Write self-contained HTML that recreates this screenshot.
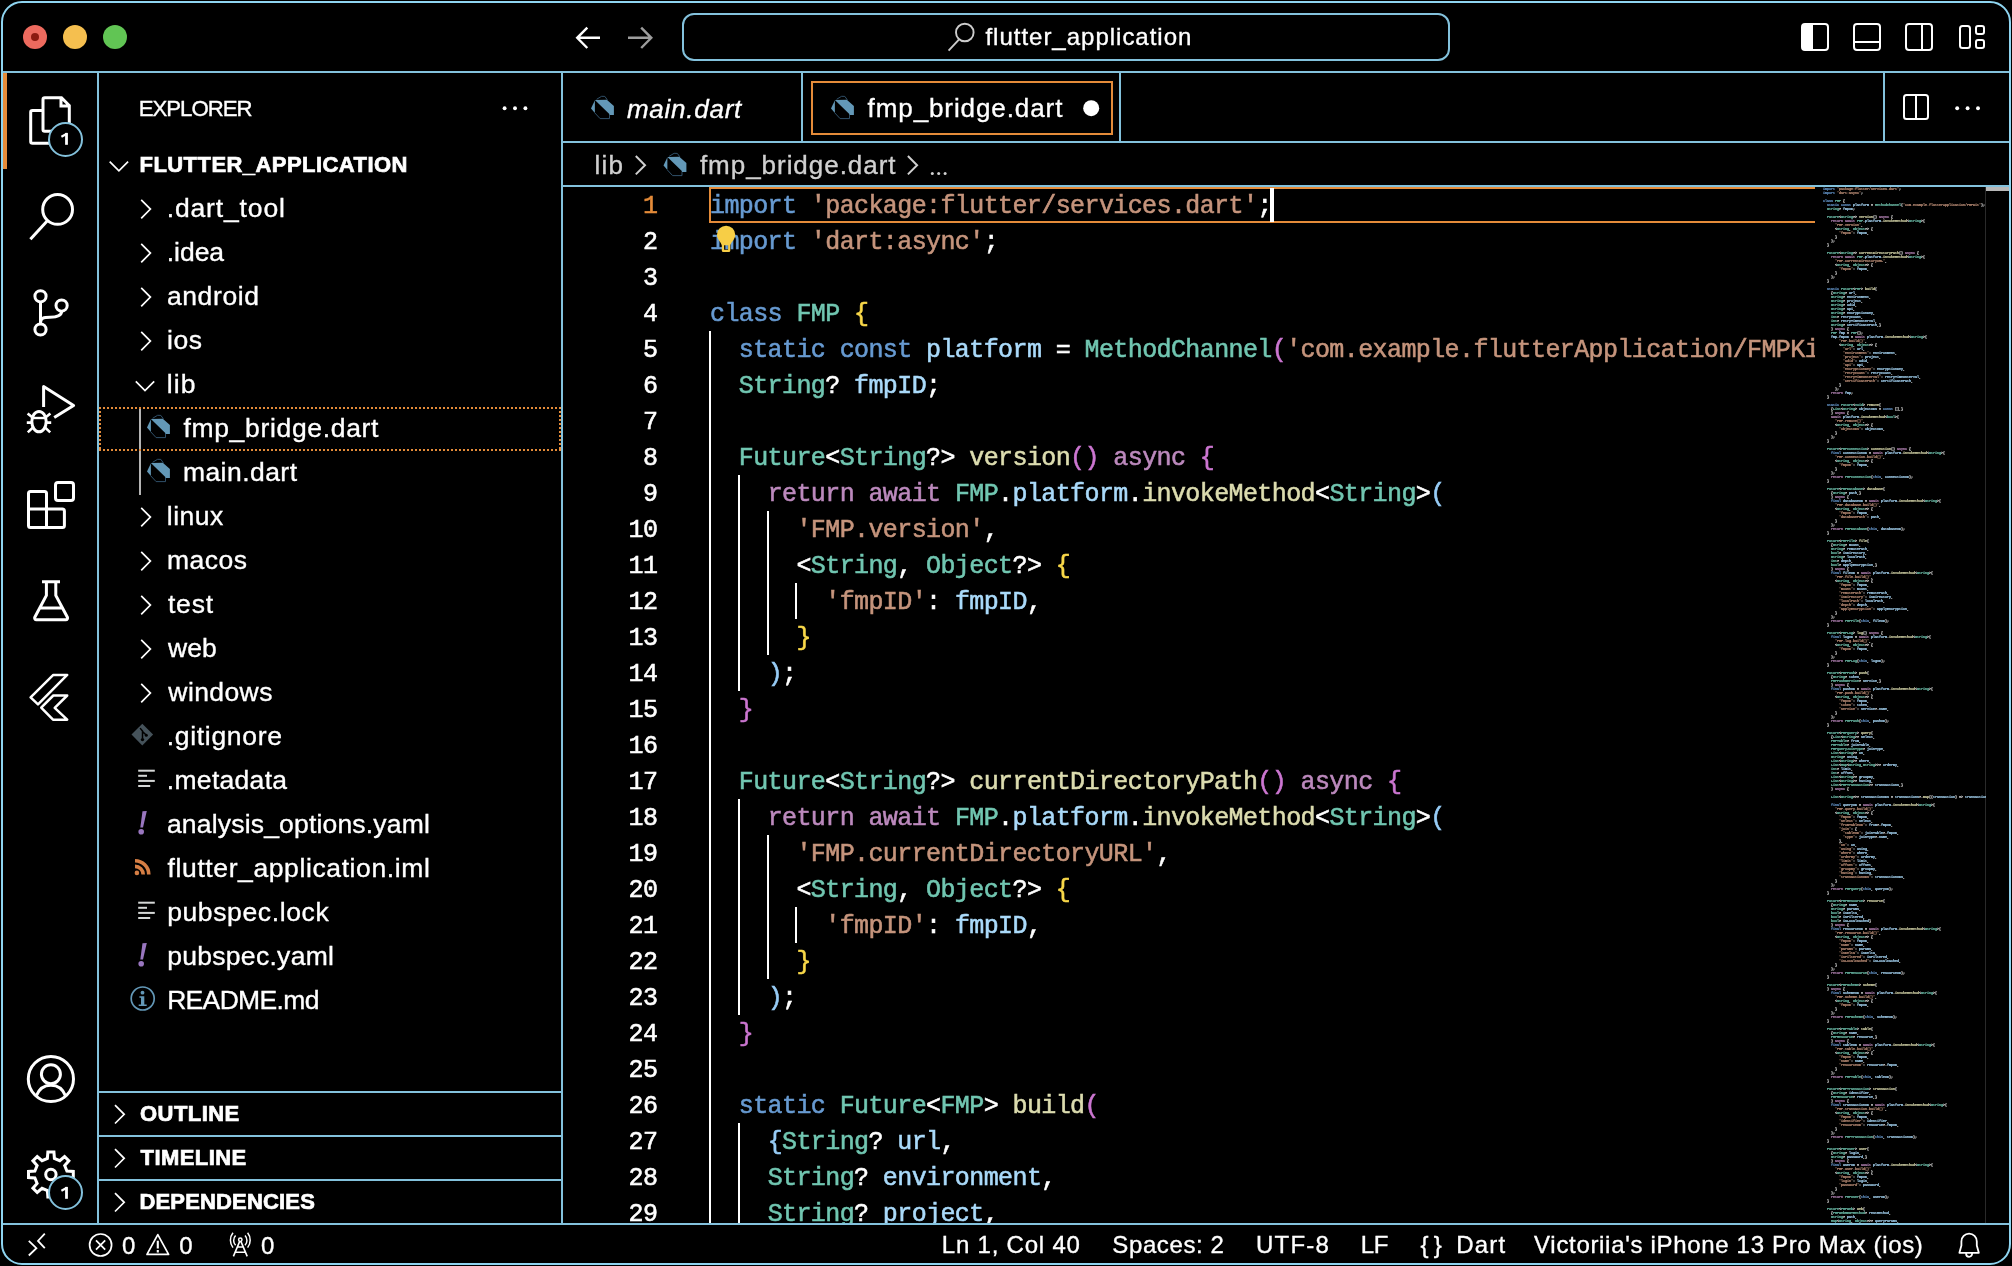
<!DOCTYPE html>
<html><head><meta charset="utf-8"><title>fmp_bridge.dart — flutter_application</title>
<style>
*{box-sizing:border-box;margin:0;padding:0}
html,body{width:2012px;height:1266px;background:#000;overflow:hidden}
body{font-family:"Liberation Sans",sans-serif;color:#fff;position:relative;-webkit-font-smoothing:antialiased}
.abs{position:absolute}

#win{position:absolute;left:1px;top:1px;width:2010px;height:1264px;border:2px solid #8ed4f0;border-radius:21px;pointer-events:none;z-index:50}
.t{position:absolute;white-space:pre;line-height:1;color:#fff;-webkit-text-stroke:0.35px currentColor}
.ui{font-size:26px}
.row{position:absolute;left:99px;width:462px;height:44px}
.mono{font-family:"Liberation Mono",monospace}
#code{position:absolute;left:563px;top:187px;width:1252px;height:1036px;overflow:hidden}
.cl{position:absolute;left:147px;height:36px;line-height:36px;font-family:"Liberation Mono",monospace;font-size:25px;letter-spacing:-0.6px;white-space:pre;color:#fff;-webkit-text-stroke:0.55px currentColor}
.ln{position:absolute;left:0;width:94.4px;height:36px;line-height:36px;text-align:right;font-family:"Liberation Mono",monospace;font-size:25px;letter-spacing:-0.6px;color:#fff;-webkit-text-stroke:0.55px currentColor}
.g{position:absolute;width:2px;background:#fff}
#mm{position:absolute;left:1823px;top:187px;width:163px;height:1036px;overflow:hidden}
#mmi{transform-origin:0 0;transform:scale(0.16666667);font-family:"Liberation Mono",monospace;font-size:20px;line-height:24px;white-space:pre;color:#fff;width:1200px;font-weight:bold;-webkit-text-stroke:0.7px currentColor}
</style></head><body>
<div id="root" style="position:absolute;left:0;top:0;width:2012px;height:1266px;will-change:transform">
<div class="abs" style="left:3px;top:71px;width:2006px;height:2px;background:#83C1DC"></div>
<div class="abs" style="left:97px;top:73px;width:2px;height:1150px;background:#83C1DC"></div>
<div class="abs" style="left:561px;top:73px;width:2px;height:1150px;background:#83C1DC"></div>
<div class="abs" style="left:563px;top:141px;width:1446px;height:2px;background:#83C1DC"></div>
<div class="abs" style="left:563px;top:185px;width:1446px;height:2px;background:#83C1DC"></div>
<div class="abs" style="left:3px;top:1223px;width:2006px;height:2px;background:#83C1DC"></div>
<div class="abs" style="left:23px;top:25px;width:24px;height:24px;border-radius:50%;background:#ED6A5E"></div>
<div class="abs" style="left:63px;top:25px;width:24px;height:24px;border-radius:50%;background:#F5BF4F"></div>
<div class="abs" style="left:103px;top:25px;width:24px;height:24px;border-radius:50%;background:#61C554"></div>
<div class="abs" style="left:31px;top:33px;width:8px;height:8px;border-radius:50%;background:#8C1A10"></div>
<svg class="abs" style="left:570px;top:20px;" width="90" height="36" viewBox="570 20 90 36" fill="none" stroke="#fff" stroke-width="3" stroke-linecap="butt" stroke-linejoin="miter"><path d="M600 37.8 H577.5 M587.3 27.6 L577.2 37.8 L587.3 48" stroke="#fff" stroke-width="2.4"/><path d="M628 37.8 H651 M641.2 27.6 L651.3 37.8 L641.2 48" stroke="#9d9d9d" stroke-width="2.4"/></svg>
<div class="abs" style="left:682px;top:13px;width:768px;height:48px;border:2px solid #83C1DC;border-radius:12px"></div>
<svg class="abs" style="left:944px;top:20px;" width="36" height="36" viewBox="944 20 36 36" fill="none" stroke="#fff" stroke-width="3" stroke-linecap="butt" stroke-linejoin="miter"><circle cx="964.8" cy="32.5" r="8.8" stroke="#ccc" stroke-width="1.9"/><path d="M958.9 39.6 L948.6 50.6" stroke="#ccc" stroke-width="1.9"/></svg>
<span class="t" id="t1" style="left:985.419px;top:25.18px;font-size:24px;color:#fff;letter-spacing:0.992px;">flutter_application</span>
<svg class="abs" style="left:1796px;top:18px;" width="196" height="38" viewBox="1796 18 196 38" fill="none" stroke="#fff" stroke-width="3" stroke-linecap="butt" stroke-linejoin="miter"><rect x="1802" y="24" width="26" height="26" rx="3" stroke-width="2"/><path d="M1802 26 a2 2 0 0 1 2 -2 H1813 V50 H1804 a2 2 0 0 1 -2 -2 Z" fill="#fff" stroke="none"/><rect x="1854" y="24" width="26" height="26" rx="3" stroke-width="2"/><path d="M1854 42 H1880" stroke-width="2"/><rect x="1906" y="24" width="26" height="26" rx="3" stroke-width="2"/><path d="M1922 24 V50" stroke-width="2"/><rect x="1960" y="26" width="10" height="22" rx="2.5" stroke-width="2"/><rect x="1976" y="26" width="8" height="8" rx="2" stroke-width="2"/><rect x="1976" y="40" width="8" height="8" rx="2" stroke-width="2"/></svg>
<div class="abs" style="left:3px;top:73px;width:4px;height:96px;background:#E48B39"></div>
<svg class="abs" style="left:3px;top:73px;" width="94" height="1150" viewBox="3 73 94 1150" fill="none" stroke="#fff" stroke-width="3" stroke-linecap="butt" stroke-linejoin="miter"><path d="M43 99.5 a1.8 1.8 0 0 1 1.8 -1.8 H61.5 L69.3 105.5 V129.5 a1.8 1.8 0 0 1 -1.8 1.8 H44.8 a1.8 1.8 0 0 1 -1.8 -1.8 Z M61 98 V106 H69"/><path d="M43 110.5 H32.5 a1.8 1.8 0 0 0 -1.8 1.8 V141.5 a1.8 1.8 0 0 0 1.8 1.8 H56"/><circle cx="57.6" cy="209.4" r="14.9"/><path d="M47.6 220.6 L30.4 239.2"/><circle cx="40.5" cy="296.3" r="5.6"/><circle cx="40.5" cy="329.5" r="5.6"/><circle cx="61.6" cy="305.6" r="5.6"/><path d="M40.5 302 V324 M40.5 323 C40.5 317.5 44 317.2 50 317.2 C57 317.2 61.6 316 61.6 311.3"/><path d="M43.6 407 V386.6 L73.6 405.4 L54.2 417.6" stroke-linejoin="round"/><ellipse cx="39" cy="421.6" rx="7.2" ry="10.2"/><path d="M32.3 418 H45.7" stroke-width="2.4"/><path d="M27.6 413.4 L32.6 417.6 M26.8 422.6 H31.6 M27.8 432.4 L33 427.4 M50.4 413.4 L45.4 417.6 M51.2 422.6 H46.4 M50.2 432.4 L45 427.4" stroke-width="2.6"/><path d="M30.5 491.4 H44.5 a2 2 0 0 1 2 2 V509 H62.4 a2 2 0 0 1 2 2 V525.5 a2 2 0 0 1 -2 2 H30.5 a2 2 0 0 1 -2 -2 V493.4 a2 2 0 0 1 2 -2 Z M28.5 509 H46.5 V527.5"/><rect x="55.5" y="482.5" width="18" height="18" rx="2.5"/><path d="M42 581.8 H60 M46.4 582 V595.4 L34.8 617.2 a1.8 1.8 0 0 0 1.6 2.6 H65.8 a1.8 1.8 0 0 0 1.6 -2.6 L55.8 595.4 V582 M40.2 608 H62"/><path d="M53.3 674.9 H67.2 L38 704.4 L30.6 697.3 Z M53.3 695.5 H67.2 L54.7 707.8 L67.2 719.7 H53 L41.2 707.7 Z" stroke-width="2.5" stroke-linejoin="round"/><circle cx="50.9" cy="1079" r="22.6"/><circle cx="50.9" cy="1074.2" r="9.5"/><path d="M36.2 1096 C39 1088.6 44.5 1085.2 50.9 1085.2 C57.3 1085.2 62.8 1088.6 65.6 1096"/><path d="M47.40 1158.48 L47.86 1152.11 L53.94 1152.11 L54.40 1158.48 L59.76 1160.70 L64.58 1156.51 L68.89 1160.82 L64.70 1165.64 L66.92 1171.00 L73.29 1171.46 L73.29 1177.54 L66.92 1178.00 L64.70 1183.36 L68.89 1188.18 L64.58 1192.49 L59.76 1188.30 L54.40 1190.52 L53.94 1196.89 L47.86 1196.89 L47.40 1190.52 L42.04 1188.30 L37.22 1192.49 L32.91 1188.18 L37.10 1183.36 L34.88 1178.00 L28.51 1177.54 L28.51 1171.46 L34.88 1171.00 L37.10 1165.64 L32.91 1160.82 L37.22 1156.51 L42.04 1160.70 Z"/><circle cx="50.9" cy="1174.5" r="5.2"/></svg>
<div class="abs" style="left:47.599999999999994px;top:121.5px;width:35px;height:35px;border-radius:50%;background:#000;border:2px solid #83C1DC"></div>
<svg class="abs" style="left:55.099999999999994px;top:129px;" width="20" height="20" viewBox="55.099999999999994 129 20 20" fill="none" stroke="#fff" stroke-width="3" stroke-linecap="butt" stroke-linejoin="miter"><path d="M66.6 132.9 V144.8" stroke-width="2.8"/><path d="M67.0 133.8 L61.49999999999999 136.8" stroke-width="2.2"/></svg>
<div class="abs" style="left:47.599999999999994px;top:1175.2px;width:35px;height:35px;border-radius:50%;background:#000;border:2px solid #83C1DC"></div>
<svg class="abs" style="left:55.099999999999994px;top:1182.7px;" width="20" height="20" viewBox="55.099999999999994 1182.7 20 20" fill="none" stroke="#fff" stroke-width="3" stroke-linecap="butt" stroke-linejoin="miter"><path d="M66.6 1186.6000000000001 V1198.5" stroke-width="2.8"/><path d="M67.0 1187.5 L61.49999999999999 1190.5" stroke-width="2.2"/></svg>
<span class="t" id="t2" style="left:138.735px;top:97.71px;font-size:22.2px;color:#fff;letter-spacing:-1.020px;">EXPLORER</span>
<svg class="abs" style="left:498px;top:100px;" width="36" height="16" viewBox="498 100 36 16" fill="none" stroke="#fff" stroke-width="3" stroke-linecap="butt" stroke-linejoin="miter"><circle cx="504.6" cy="108.3" r="1.95" fill="#fff" stroke="none"/><circle cx="515.0" cy="108.3" r="1.95" fill="#fff" stroke="none"/><circle cx="525.4" cy="108.3" r="1.95" fill="#fff" stroke="none"/></svg>
<span class="t" id="t3" style="left:139.523px;top:154.28px;font-size:22px;color:#fff;letter-spacing:0.446px;font-weight:bold;-webkit-text-stroke:0.7px currentColor;">FLUTTER_APPLICATION</span>
<span class="t" id="t4" style="left:166.708px;top:194.57px;font-size:26.5px;color:#fff;letter-spacing:0.856px;">.dart_tool</span>
<span class="t" id="t5" style="left:166.708px;top:238.57px;font-size:26.5px;color:#fff;letter-spacing:-0.016px;">.idea</span>
<span class="t" id="t6" style="left:166.897px;top:282.57px;font-size:26.5px;color:#fff;letter-spacing:0.614px;">android</span>
<span class="t" id="t7" style="left:167.00400000000002px;top:326.57px;font-size:26.5px;color:#fff;letter-spacing:0.585px;">ios</span>
<span class="t" id="t8" style="left:166.87099999999998px;top:370.57px;font-size:26.5px;color:#fff;letter-spacing:1.101px;">lib</span>
<span class="t" id="t9" style="left:183.412px;top:414.57px;font-size:26.5px;color:#fff;letter-spacing:0.676px;">fmp_bridge.dart</span>
<span class="t" id="t10" style="left:182.89200000000002px;top:458.57px;font-size:26.5px;color:#fff;letter-spacing:0.457px;">main.dart</span>
<span class="t" id="t11" style="left:166.87099999999998px;top:502.57px;font-size:26.5px;color:#fff;letter-spacing:0.456px;">linux</span>
<span class="t" id="t12" style="left:166.976px;top:546.57px;font-size:26.5px;color:#fff;letter-spacing:0.504px;">macos</span>
<span class="t" id="t13" style="left:167.904px;top:590.57px;font-size:26.5px;color:#fff;letter-spacing:0.821px;">test</span>
<span class="t" id="t14" style="left:168.095px;top:634.57px;font-size:26.5px;color:#fff;letter-spacing:0.076px;">web</span>
<span class="t" id="t15" style="left:168.36499999999998px;top:678.57px;font-size:26.5px;color:#fff;letter-spacing:0.404px;">windows</span>
<span class="t" id="t16" style="left:166.803px;top:722.57px;font-size:26.5px;color:#fff;letter-spacing:0.677px;">.gitignore</span>
<span class="t" id="t17" style="left:166.803px;top:766.57px;font-size:26.5px;color:#fff;letter-spacing:0.301px;">.metadata</span>
<span class="t" id="t18" style="left:166.965px;top:810.57px;font-size:26.5px;color:#fff;letter-spacing:0.180px;">analysis_options.yaml</span>
<span class="t" id="t19" style="left:167.598px;top:854.57px;font-size:26.5px;color:#fff;letter-spacing:0.603px;">flutter_application.iml</span>
<span class="t" id="t20" style="left:167.125px;top:898.57px;font-size:26.5px;color:#fff;letter-spacing:0.621px;">pubspec.lock</span>
<span class="t" id="t21" style="left:167.125px;top:942.57px;font-size:26.5px;color:#fff;letter-spacing:0.304px;">pubspec.yaml</span>
<span class="t" id="t22" style="left:167.147px;top:986.57px;font-size:26.5px;color:#fff;letter-spacing:-0.666px;">README.md</span>
<svg class="abs" style="left:99px;top:143px;" width="100" height="900" viewBox="99 143 100 900" fill="none" stroke="#fff" stroke-width="3" stroke-linecap="butt" stroke-linejoin="miter"><path d="M109.7 161.6 L118.9 170.79999999999998 L128.1 161.6" stroke="#fff" stroke-width="1.7"/><path d="M141.20000000000002 199.9 L150.4 209.1 L141.20000000000002 218.29999999999998" stroke="#fff" stroke-width="1.7"/><path d="M141.20000000000002 243.9 L150.4 253.1 L141.20000000000002 262.3" stroke="#fff" stroke-width="1.7"/><path d="M141.20000000000002 287.90000000000003 L150.4 297.1 L141.20000000000002 306.3" stroke="#fff" stroke-width="1.7"/><path d="M141.20000000000002 331.90000000000003 L150.4 341.1 L141.20000000000002 350.3" stroke="#fff" stroke-width="1.7"/><path d="M135.8 381.4 L145 390.6 L154.2 381.4" stroke="#fff" stroke-width="1.7"/><polygon points="150.9,419.0 162.8,418.7 169.9,424.9 169.9,434.1 165.3,434.1 165.3,433.0 151.4,419.6" fill="#6398B7" stroke="none"/><polygon points="150.9,419.2 147.0,427.6 150.9,432.0" fill="#6398B7" stroke="none"/><polyline points="152.6,418.3 157.6,415.3 160.8,415.4 163.4,418.9" stroke="#365975" stroke-width="0.9"/><polyline points="150.9,432.0 156.1,437.6 165.5,437.6 165.5,434.1" stroke="#365975" stroke-width="0.9"/><polygon points="150.9,463.0 162.8,462.7 169.9,468.9 169.9,478.1 165.3,478.1 165.3,477.0 151.4,463.6" fill="#6398B7" stroke="none"/><polygon points="150.9,463.2 147.0,471.6 150.9,476.0" fill="#6398B7" stroke="none"/><polyline points="152.6,462.3 157.6,459.3 160.8,459.4 163.4,462.9" stroke="#365975" stroke-width="0.9"/><polyline points="150.9,476.0 156.1,481.6 165.5,481.6 165.5,478.1" stroke="#365975" stroke-width="0.9"/><path d="M141.20000000000002 507.90000000000003 L150.4 517.1 L141.20000000000002 526.3000000000001" stroke="#fff" stroke-width="1.7"/><path d="M141.20000000000002 551.9 L150.4 561.1 L141.20000000000002 570.3000000000001" stroke="#fff" stroke-width="1.7"/><path d="M141.20000000000002 595.9 L150.4 605.1 L141.20000000000002 614.3000000000001" stroke="#fff" stroke-width="1.7"/><path d="M141.20000000000002 639.9 L150.4 649.1 L141.20000000000002 658.3000000000001" stroke="#fff" stroke-width="1.7"/><path d="M141.20000000000002 683.9 L150.4 693.1 L141.20000000000002 702.3000000000001" stroke="#fff" stroke-width="1.7"/><path d="M142.3 723.8000000000001 L153.10000000000002 734.6 L142.3 745.4 L131.5 734.6 Z" fill="#45525A" stroke="none"/><path d="M140.10000000000002 728.1 L142.5 731.1 V738.6 M142.5 731.6 L145.9 734.8000000000001" stroke="#000" stroke-width="1.5"/><circle cx="142.5" cy="739.6" r="1.7" fill="#000" stroke="none"/><circle cx="146.3" cy="735.2" r="1.5" fill="#000" stroke="none"/><rect x="138.2" y="769.7" width="16.6" height="2" fill="#D5D7D6" stroke="none"/><rect x="138.2" y="774.8" width="8.8" height="2" fill="#D5D7D6" stroke="none"/><rect x="138.2" y="779.9" width="16.6" height="2" fill="#D5D7D6" stroke="none"/><rect x="138.2" y="785.0" width="12" height="2" fill="#D5D7D6" stroke="none"/><path d="M142.5 811.2 L146.8 810.9 L143 827.6 L140.3 827.6 Z" fill="#9976BF" stroke="none"/><circle cx="141.2" cy="831.8" r="2.8" fill="#9976BF" stroke="none"/><circle cx="136.9" cy="872.9" r="2.3" fill="#D57E44" stroke="none"/><path d="M135.0 866.4 A8.2 8.2 0 0 1 143.2 874.6" stroke="#D57E44" stroke-width="3.6"/><path d="M135.0 860.8000000000001 A13.8 13.8 0 0 1 148.8 874.6" stroke="#D57E44" stroke-width="3.6"/><rect x="138.2" y="901.7" width="16.6" height="2" fill="#D5D7D6" stroke="none"/><rect x="138.2" y="906.8" width="8.8" height="2" fill="#D5D7D6" stroke="none"/><rect x="138.2" y="911.9" width="16.6" height="2" fill="#D5D7D6" stroke="none"/><rect x="138.2" y="917.0" width="12" height="2" fill="#D5D7D6" stroke="none"/><path d="M142.5 943.2 L146.8 942.9 L143 959.6 L140.3 959.6 Z" fill="#9976BF" stroke="none"/><circle cx="141.2" cy="963.8" r="2.8" fill="#9976BF" stroke="none"/><circle cx="142.7" cy="998.5" r="11.5" stroke="#6398B7" stroke-width="1.7"/><circle cx="142.5" cy="992.7" r="1.9" fill="#6398B7" stroke="none"/><path d="M139.39999999999998 996.3 H144.29999999999998 V1004.5 H146.7 V1005.9 H138.7 V1004.5 H141.0 V997.7 H139.39999999999998 Z" fill="#6398B7" stroke="none"/></svg>
<div class="abs" style="left:139px;top:407px;width:2px;height:88px;background:#b4b4b4"></div>
<div class="abs" style="left:99px;top:407px;width:462px;height:2px;background:repeating-linear-gradient(90deg,#E48B39 0 2px,transparent 2px 4px)"></div>
<div class="abs" style="left:99px;top:449px;width:462px;height:2px;background:repeating-linear-gradient(90deg,#E48B39 0 2px,transparent 2px 4px)"></div>
<div class="abs" style="left:99px;top:407px;width:2px;height:44px;background:repeating-linear-gradient(180deg,#E48B39 0 2px,transparent 2px 4px)"></div>
<div class="abs" style="left:559px;top:407px;width:2px;height:44px;background:repeating-linear-gradient(180deg,#E48B39 0 2px,transparent 2px 4px)"></div>
<div class="abs" style="left:99px;top:1091px;width:462px;height:2px;background:#83C1DC"></div>
<span class="t" id="t23" style="left:140.025px;top:1103.38px;font-size:22px;color:#fff;letter-spacing:0.445px;font-weight:bold;-webkit-text-stroke:0.7px currentColor;">OUTLINE</span>
<div class="abs" style="left:99px;top:1135px;width:462px;height:2px;background:#83C1DC"></div>
<span class="t" id="t24" style="left:140.583px;top:1147.38px;font-size:22px;color:#fff;letter-spacing:0.423px;font-weight:bold;-webkit-text-stroke:0.7px currentColor;">TIMELINE</span>
<div class="abs" style="left:99px;top:1179px;width:462px;height:2px;background:#83C1DC"></div>
<span class="t" id="t25" style="left:139.412px;top:1191.38px;font-size:22px;color:#fff;letter-spacing:0.169px;font-weight:bold;-webkit-text-stroke:0.7px currentColor;">DEPENDENCIES</span>
<svg class="abs" style="left:99px;top:1091px;" width="60" height="132" viewBox="99 1091 60 132" fill="none" stroke="#fff" stroke-width="3" stroke-linecap="butt" stroke-linejoin="miter"><path d="M115.0 1105.1 L124.19999999999999 1114.3 L115.0 1123.5" stroke="#fff" stroke-width="1.7"/><path d="M115.0 1149.1 L124.19999999999999 1158.3 L115.0 1167.5" stroke="#fff" stroke-width="1.7"/><path d="M115.0 1193.1 L124.19999999999999 1202.3 L115.0 1211.5" stroke="#fff" stroke-width="1.7"/></svg>
<div class="abs" style="left:801px;top:73px;width:2px;height:68px;background:#83C1DC"></div>
<div class="abs" style="left:1119px;top:73px;width:2px;height:68px;background:#83C1DC"></div>
<div class="abs" style="left:1883px;top:73px;width:2px;height:68px;background:#83C1DC"></div>
<div class="abs" style="left:811px;top:81px;width:302px;height:54px;border:2px solid #E48B39"></div>
<svg class="abs" style="left:563px;top:73px;" width="1446" height="68" viewBox="563 73 1446 68" fill="none" stroke="#fff" stroke-width="3" stroke-linecap="butt" stroke-linejoin="miter"><polygon points="594.9,100.0 606.8,99.7 613.9,105.9 613.9,115.1 609.3,115.1 609.3,114.0 595.4,100.6" fill="#6398B7" stroke="none"/><polygon points="594.9,100.2 591.0,108.6 594.9,113.0" fill="#6398B7" stroke="none"/><polyline points="596.6,99.3 601.6,96.3 604.8,96.4 607.4,99.9" stroke="#365975" stroke-width="0.9"/><polyline points="594.9,113.0 600.1,118.6 609.5,118.6 609.5,115.1" stroke="#365975" stroke-width="0.9"/><polygon points="834.9,100.0 846.8,99.7 853.9,105.9 853.9,115.1 849.3,115.1 849.3,114.0 835.4,100.6" fill="#6398B7" stroke="none"/><polygon points="834.9,100.2 831.0,108.6 834.9,113.0" fill="#6398B7" stroke="none"/><polyline points="836.6,99.3 841.6,96.3 844.8,96.4 847.4,99.9" stroke="#365975" stroke-width="0.9"/><polyline points="834.9,113.0 840.1,118.6 849.5,118.6 849.5,115.1" stroke="#365975" stroke-width="0.9"/><circle cx="1091.2" cy="108.2" r="8" fill="#fff" stroke="none"/><rect x="1904" y="95" width="24" height="24" rx="2.5" stroke-width="2"/><path d="M1916 95 V119" stroke-width="2"/><circle cx="1957.2" cy="108.3" r="1.95" fill="#fff" stroke="none"/><circle cx="1967.6000000000001" cy="108.3" r="1.95" fill="#fff" stroke="none"/><circle cx="1978.0" cy="108.3" r="1.95" fill="#fff" stroke="none"/></svg>
<span class="t" id="t26" style="left:626.959px;top:95.99px;font-size:26px;color:#fff;letter-spacing:0.748px;font-style:italic;">main.dart</span>
<span class="t" id="t27" style="left:867.563px;top:94.99px;font-size:26px;color:#fff;letter-spacing:0.907px;">fmp_bridge.dart</span>
<span class="t" id="t28" style="left:594.5999999999999px;top:152.49px;font-size:26px;color:#d0d0d0;letter-spacing:1.173px;">lib</span>
<span class="t" id="t29" style="left:699.912px;top:152.49px;font-size:26px;color:#d0d0d0;letter-spacing:0.967px;">fmp_bridge.dart</span>
<svg class="abs" style="left:563px;top:143px;" width="600" height="42" viewBox="563 143 600 42" fill="none" stroke="#fff" stroke-width="3" stroke-linecap="butt" stroke-linejoin="miter"><path d="M635.8 156.0 L645.0 165.2 L635.8 174.39999999999998" stroke="#d0d0d0" stroke-width="2"/><polygon points="667.4,157.0 679.3,156.7 686.4,162.9 686.4,172.1 681.8,172.1 681.8,171.0 667.9,157.6" fill="#6398B7" stroke="none"/><polygon points="667.4,157.2 663.5,165.6 667.4,170.0" fill="#6398B7" stroke="none"/><polyline points="669.1,156.3 674.1,153.3 677.3,153.4 679.9,156.9" stroke="#365975" stroke-width="0.9"/><polyline points="667.4,170.0 672.6,175.6 682.0,175.6 682.0,172.1" stroke="#365975" stroke-width="0.9"/><path d="M907.9 156.0 L917.1 165.2 L907.9 174.39999999999998" stroke="#d0d0d0" stroke-width="2"/><circle cx="932.3" cy="173.4" r="1.5" fill="#d0d0d0" stroke="none"/><circle cx="938.6999999999999" cy="173.4" r="1.5" fill="#d0d0d0" stroke="none"/><circle cx="945.0999999999999" cy="173.4" r="1.5" fill="#d0d0d0" stroke="none"/></svg>
<div id="code">
<div class="abs" style="left:146px;top:0;width:1200px;height:36px;border:2px solid #E48B39;border-right:none"></div>
<div class="ln" style="top:2px;color:#E48B39">1</div><div class="cl" style="top:1.6px"><span style="color:#679AD1">import</span> <span style="color:#C5947C">'package:flutter/services.dart'</span><span style="color:#FFFFFF">;</span></div>
<div class="ln" style="top:38px;color:#fff">2</div><div class="cl" style="top:37.6px"><span style="color:#679AD1">import</span> <span style="color:#C5947C">'dart:async'</span><span style="color:#FFFFFF">;</span></div>
<div class="ln" style="top:74px;color:#fff">3</div>
<div class="ln" style="top:110px;color:#fff">4</div><div class="cl" style="top:109.6px"><span style="color:#679AD1">class</span> <span style="color:#71C6B1">FMP</span> <span style="color:#F9D849">{</span></div>
<div class="ln" style="top:146px;color:#fff">5</div><div class="g" style="left:146.0px;top:144px;height:36px"></div><div class="cl" style="top:145.6px">  <span style="color:#679AD1">static</span> <span style="color:#679AD1">const</span> <span style="color:#AADAFA">platform</span> <span style="color:#FFFFFF">=</span> <span style="color:#71C6B1">MethodChannel</span><span style="color:#CC76D1">(</span><span style="color:#C5947C">'com.example.flutterApplication/FMPKit'</span><span style="color:#CC76D1">)</span><span style="color:#FFFFFF">;</span></div>
<div class="ln" style="top:182px;color:#fff">6</div><div class="g" style="left:146.0px;top:180px;height:36px"></div><div class="cl" style="top:181.6px">  <span style="color:#71C6B1">String</span><span style="color:#FFFFFF">?</span> <span style="color:#AADAFA">fmpID</span><span style="color:#FFFFFF">;</span></div>
<div class="ln" style="top:218px;color:#fff">7</div><div class="g" style="left:146.0px;top:216px;height:36px"></div>
<div class="ln" style="top:254px;color:#fff">8</div><div class="g" style="left:146.0px;top:252px;height:36px"></div><div class="cl" style="top:253.6px">  <span style="color:#71C6B1">Future</span><span style="color:#FFFFFF">&lt;</span><span style="color:#71C6B1">String</span><span style="color:#FFFFFF">?&gt;</span> <span style="color:#DCDCAF">version</span><span style="color:#CC76D1">()</span> <span style="color:#BC89BD">async</span> <span style="color:#CC76D1">{</span></div>
<div class="ln" style="top:290px;color:#fff">9</div><div class="g" style="left:146.0px;top:288px;height:36px"></div><div class="g" style="left:174.8px;top:288px;height:36px"></div><div class="cl" style="top:289.6px">    <span style="color:#BC89BD">return</span> <span style="color:#BC89BD">await</span> <span style="color:#71C6B1">FMP</span><span style="color:#FFFFFF">.</span><span style="color:#AADAFA">platform</span><span style="color:#FFFFFF">.</span><span style="color:#DCDCAF">invokeMethod</span><span style="color:#FFFFFF">&lt;</span><span style="color:#71C6B1">String</span><span style="color:#FFFFFF">&gt;</span><span style="color:#97CCF6">(</span></div>
<div class="ln" style="top:326px;color:#fff">10</div><div class="g" style="left:146.0px;top:324px;height:36px"></div><div class="g" style="left:174.8px;top:324px;height:36px"></div><div class="g" style="left:203.6px;top:324px;height:36px"></div><div class="cl" style="top:325.6px">      <span style="color:#C5947C">'FMP.version'</span><span style="color:#FFFFFF">,</span></div>
<div class="ln" style="top:362px;color:#fff">11</div><div class="g" style="left:146.0px;top:360px;height:36px"></div><div class="g" style="left:174.8px;top:360px;height:36px"></div><div class="g" style="left:203.6px;top:360px;height:36px"></div><div class="cl" style="top:361.6px">      <span style="color:#FFFFFF">&lt;</span><span style="color:#71C6B1">String</span><span style="color:#FFFFFF">,</span> <span style="color:#71C6B1">Object</span><span style="color:#FFFFFF">?&gt;</span> <span style="color:#F9D849">{</span></div>
<div class="ln" style="top:398px;color:#fff">12</div><div class="g" style="left:146.0px;top:396px;height:36px"></div><div class="g" style="left:174.8px;top:396px;height:36px"></div><div class="g" style="left:203.6px;top:396px;height:36px"></div><div class="g" style="left:232.4px;top:396px;height:36px"></div><div class="cl" style="top:397.6px">        <span style="color:#C5947C">'fmpID'</span><span style="color:#FFFFFF">:</span> <span style="color:#AADAFA">fmpID</span><span style="color:#FFFFFF">,</span></div>
<div class="ln" style="top:434px;color:#fff">13</div><div class="g" style="left:146.0px;top:432px;height:36px"></div><div class="g" style="left:174.8px;top:432px;height:36px"></div><div class="g" style="left:203.6px;top:432px;height:36px"></div><div class="cl" style="top:433.6px">      <span style="color:#F9D849">}</span></div>
<div class="ln" style="top:470px;color:#fff">14</div><div class="g" style="left:146.0px;top:468px;height:36px"></div><div class="g" style="left:174.8px;top:468px;height:36px"></div><div class="cl" style="top:469.6px">    <span style="color:#97CCF6">)</span><span style="color:#FFFFFF">;</span></div>
<div class="ln" style="top:506px;color:#fff">15</div><div class="g" style="left:146.0px;top:504px;height:36px"></div><div class="cl" style="top:505.6px">  <span style="color:#CC76D1">}</span></div>
<div class="ln" style="top:542px;color:#fff">16</div><div class="g" style="left:146.0px;top:540px;height:36px"></div>
<div class="ln" style="top:578px;color:#fff">17</div><div class="g" style="left:146.0px;top:576px;height:36px"></div><div class="cl" style="top:577.6px">  <span style="color:#71C6B1">Future</span><span style="color:#FFFFFF">&lt;</span><span style="color:#71C6B1">String</span><span style="color:#FFFFFF">?&gt;</span> <span style="color:#DCDCAF">currentDirectoryPath</span><span style="color:#CC76D1">()</span> <span style="color:#BC89BD">async</span> <span style="color:#CC76D1">{</span></div>
<div class="ln" style="top:614px;color:#fff">18</div><div class="g" style="left:146.0px;top:612px;height:36px"></div><div class="g" style="left:174.8px;top:612px;height:36px"></div><div class="cl" style="top:613.6px">    <span style="color:#BC89BD">return</span> <span style="color:#BC89BD">await</span> <span style="color:#71C6B1">FMP</span><span style="color:#FFFFFF">.</span><span style="color:#AADAFA">platform</span><span style="color:#FFFFFF">.</span><span style="color:#DCDCAF">invokeMethod</span><span style="color:#FFFFFF">&lt;</span><span style="color:#71C6B1">String</span><span style="color:#FFFFFF">&gt;</span><span style="color:#97CCF6">(</span></div>
<div class="ln" style="top:650px;color:#fff">19</div><div class="g" style="left:146.0px;top:648px;height:36px"></div><div class="g" style="left:174.8px;top:648px;height:36px"></div><div class="g" style="left:203.6px;top:648px;height:36px"></div><div class="cl" style="top:649.6px">      <span style="color:#C5947C">'FMP.currentDirectoryURL'</span><span style="color:#FFFFFF">,</span></div>
<div class="ln" style="top:686px;color:#fff">20</div><div class="g" style="left:146.0px;top:684px;height:36px"></div><div class="g" style="left:174.8px;top:684px;height:36px"></div><div class="g" style="left:203.6px;top:684px;height:36px"></div><div class="cl" style="top:685.6px">      <span style="color:#FFFFFF">&lt;</span><span style="color:#71C6B1">String</span><span style="color:#FFFFFF">,</span> <span style="color:#71C6B1">Object</span><span style="color:#FFFFFF">?&gt;</span> <span style="color:#F9D849">{</span></div>
<div class="ln" style="top:722px;color:#fff">21</div><div class="g" style="left:146.0px;top:720px;height:36px"></div><div class="g" style="left:174.8px;top:720px;height:36px"></div><div class="g" style="left:203.6px;top:720px;height:36px"></div><div class="g" style="left:232.4px;top:720px;height:36px"></div><div class="cl" style="top:721.6px">        <span style="color:#C5947C">'fmpID'</span><span style="color:#FFFFFF">:</span> <span style="color:#AADAFA">fmpID</span><span style="color:#FFFFFF">,</span></div>
<div class="ln" style="top:758px;color:#fff">22</div><div class="g" style="left:146.0px;top:756px;height:36px"></div><div class="g" style="left:174.8px;top:756px;height:36px"></div><div class="g" style="left:203.6px;top:756px;height:36px"></div><div class="cl" style="top:757.6px">      <span style="color:#F9D849">}</span></div>
<div class="ln" style="top:794px;color:#fff">23</div><div class="g" style="left:146.0px;top:792px;height:36px"></div><div class="g" style="left:174.8px;top:792px;height:36px"></div><div class="cl" style="top:793.6px">    <span style="color:#97CCF6">)</span><span style="color:#FFFFFF">;</span></div>
<div class="ln" style="top:830px;color:#fff">24</div><div class="g" style="left:146.0px;top:828px;height:36px"></div><div class="cl" style="top:829.6px">  <span style="color:#CC76D1">}</span></div>
<div class="ln" style="top:866px;color:#fff">25</div><div class="g" style="left:146.0px;top:864px;height:36px"></div>
<div class="ln" style="top:902px;color:#fff">26</div><div class="g" style="left:146.0px;top:900px;height:36px"></div><div class="cl" style="top:901.6px">  <span style="color:#679AD1">static</span> <span style="color:#71C6B1">Future</span><span style="color:#FFFFFF">&lt;</span><span style="color:#71C6B1">FMP</span><span style="color:#FFFFFF">&gt;</span> <span style="color:#DCDCAF">build</span><span style="color:#CC76D1">(</span></div>
<div class="ln" style="top:938px;color:#fff">27</div><div class="g" style="left:146.0px;top:936px;height:36px"></div><div class="g" style="left:174.8px;top:936px;height:36px"></div><div class="cl" style="top:937.6px">    <span style="color:#97CCF6">{</span><span style="color:#71C6B1">String</span><span style="color:#FFFFFF">?</span> <span style="color:#AADAFA">url</span><span style="color:#FFFFFF">,</span></div>
<div class="ln" style="top:974px;color:#fff">28</div><div class="g" style="left:146.0px;top:972px;height:36px"></div><div class="g" style="left:174.8px;top:972px;height:36px"></div><div class="cl" style="top:973.6px">    <span style="color:#71C6B1">String</span><span style="color:#FFFFFF">?</span> <span style="color:#AADAFA">environment</span><span style="color:#FFFFFF">,</span></div>
<div class="ln" style="top:1010px;color:#fff">29</div><div class="g" style="left:146.0px;top:1008px;height:36px"></div><div class="g" style="left:174.8px;top:1008px;height:36px"></div><div class="cl" style="top:1009.6px">    <span style="color:#71C6B1">String</span><span style="color:#FFFFFF">?</span> <span style="color:#AADAFA">project</span><span style="color:#FFFFFF">,</span></div>
<div class="abs" style="left:707px;top:1px;width:4px;height:34px;background:#fff"></div>
<svg class="abs" style="left:150px;top:37px" width="30" height="32" viewBox="713 223 30 32"><path fill-rule="evenodd" d="M717 233.8 A9.1 9.1 0 1 1 735.2 233.8 C735.2 238.6 731 241.2 730.3 244.4 V249.5 a1.6 1.6 0 0 1 -1.6 1.6 H723.4 a1.6 1.6 0 0 1 -1.6 -1.6 V244.4 C721.2 241.2 717 238.6 717 233.8 Z M724.1 244.2 H728.1 V248.7 H724.1 Z" fill="#F7CE46"/></svg>
</div>
<div class="abs" style="left:1985px;top:187px;width:1px;height:1036px;background:#2a2a2a"></div>
<div class="abs" style="left:1986px;top:187px;width:23px;height:4px;background:#b8b8b8"></div>
<div id="mm"><div id="mmi"><span style="color:#679AD1">import</span> <span style="color:#C5947C">'package:flutter/services.dart'</span><span style="color:#FFFFFF">;</span>
<span style="color:#679AD1">import</span> <span style="color:#C5947C">'dart:async'</span><span style="color:#FFFFFF">;</span>

<span style="color:#679AD1">class</span> <span style="color:#71C6B1">FMP</span> <span style="color:#e8e8e8">{</span>
  <span style="color:#679AD1">static</span> <span style="color:#679AD1">const</span> <span style="color:#AADAFA">platform</span> <span style="color:#FFFFFF">=</span> <span style="color:#71C6B1">MethodChannel</span><span style="color:#e8e8e8">(</span><span style="color:#C5947C">'com.example.flutterApplication/FMPKit'</span><span style="color:#e8e8e8">)</span><span style="color:#FFFFFF">;</span>
  <span style="color:#71C6B1">String</span><span style="color:#FFFFFF">?</span> <span style="color:#AADAFA">fmpID</span><span style="color:#FFFFFF">;</span>

  <span style="color:#71C6B1">Future</span><span style="color:#FFFFFF">&lt;</span><span style="color:#71C6B1">String</span><span style="color:#FFFFFF">?&gt;</span> <span style="color:#DCDCAF">version</span><span style="color:#e8e8e8">()</span> <span style="color:#BC89BD">async</span> <span style="color:#e8e8e8">{</span>
    <span style="color:#BC89BD">return</span> <span style="color:#BC89BD">await</span> <span style="color:#71C6B1">FMP</span><span style="color:#FFFFFF">.</span><span style="color:#AADAFA">platform</span><span style="color:#FFFFFF">.</span><span style="color:#DCDCAF">invokeMethod</span><span style="color:#FFFFFF">&lt;</span><span style="color:#71C6B1">String</span><span style="color:#FFFFFF">&gt;</span><span style="color:#e8e8e8">(</span>
      <span style="color:#C5947C">'FMP.version'</span><span style="color:#FFFFFF">,</span>
      <span style="color:#FFFFFF">&lt;</span><span style="color:#71C6B1">String</span><span style="color:#FFFFFF">,</span> <span style="color:#71C6B1">Object</span><span style="color:#FFFFFF">?&gt;</span> <span style="color:#e8e8e8">{</span>
        <span style="color:#C5947C">'fmpID'</span><span style="color:#FFFFFF">:</span> <span style="color:#AADAFA">fmpID</span><span style="color:#FFFFFF">,</span>
      <span style="color:#e8e8e8">}</span>
    <span style="color:#e8e8e8">)</span><span style="color:#FFFFFF">;</span>
  <span style="color:#e8e8e8">}</span>

  <span style="color:#71C6B1">Future</span><span style="color:#FFFFFF">&lt;</span><span style="color:#71C6B1">String</span><span style="color:#FFFFFF">?&gt;</span> <span style="color:#DCDCAF">currentDirectoryPath</span><span style="color:#e8e8e8">()</span> <span style="color:#BC89BD">async</span> <span style="color:#e8e8e8">{</span>
    <span style="color:#BC89BD">return</span> <span style="color:#BC89BD">await</span> <span style="color:#71C6B1">FMP</span><span style="color:#FFFFFF">.</span><span style="color:#AADAFA">platform</span><span style="color:#FFFFFF">.</span><span style="color:#DCDCAF">invokeMethod</span><span style="color:#FFFFFF">&lt;</span><span style="color:#71C6B1">String</span><span style="color:#FFFFFF">&gt;</span><span style="color:#e8e8e8">(</span>
      <span style="color:#C5947C">'FMP.currentDirectoryURL'</span><span style="color:#FFFFFF">,</span>
      <span style="color:#FFFFFF">&lt;</span><span style="color:#71C6B1">String</span><span style="color:#FFFFFF">,</span> <span style="color:#71C6B1">Object</span><span style="color:#FFFFFF">?&gt;</span> <span style="color:#e8e8e8">{</span>
        <span style="color:#C5947C">'fmpID'</span><span style="color:#FFFFFF">:</span> <span style="color:#AADAFA">fmpID</span><span style="color:#FFFFFF">,</span>
      <span style="color:#e8e8e8">}</span>
    <span style="color:#e8e8e8">)</span><span style="color:#FFFFFF">;</span>
  <span style="color:#e8e8e8">}</span>

  <span style="color:#679AD1">static</span> <span style="color:#71C6B1">Future</span><span style="color:#FFFFFF">&lt;</span><span style="color:#71C6B1">FMP</span><span style="color:#FFFFFF">&gt;</span> <span style="color:#DCDCAF">build</span><span style="color:#e8e8e8">(</span>
    <span style="color:#e8e8e8">{</span><span style="color:#71C6B1">String</span><span style="color:#FFFFFF">?</span> <span style="color:#AADAFA">url</span><span style="color:#FFFFFF">,</span>
    <span style="color:#71C6B1">String</span><span style="color:#FFFFFF">?</span> <span style="color:#AADAFA">environment</span><span style="color:#FFFFFF">,</span>
    <span style="color:#71C6B1">String</span><span style="color:#FFFFFF">?</span> <span style="color:#AADAFA">project</span><span style="color:#FFFFFF">,</span>
    <span style="color:#71C6B1">String</span><span style="color:#FFFFFF">?</span> <span style="color:#AADAFA">udid</span><span style="color:#FFFFFF">,</span>
    <span style="color:#71C6B1">String</span><span style="color:#FFFFFF">?</span> <span style="color:#AADAFA">api</span><span style="color:#FFFFFF">,</span>
    <span style="color:#71C6B1">String</span><span style="color:#FFFFFF">?</span> <span style="color:#AADAFA">encryptionKey</span><span style="color:#FFFFFF">,</span>
    <span style="color:#71C6B1">int</span><span style="color:#FFFFFF">?</span> <span style="color:#AADAFA">retryCount</span><span style="color:#FFFFFF">,</span>
    <span style="color:#71C6B1">int</span><span style="color:#FFFFFF">?</span> <span style="color:#AADAFA">retryTimeInterval</span><span style="color:#FFFFFF">,</span>
    <span style="color:#71C6B1">String</span><span style="color:#FFFFFF">?</span> <span style="color:#AADAFA">certificatePath</span><span style="color:#FFFFFF">,</span><span style="color:#e8e8e8">}</span>
    <span style="color:#e8e8e8">)</span> <span style="color:#BC89BD">async</span> <span style="color:#e8e8e8">{</span>
    <span style="color:#71C6B1">FMP</span> <span style="color:#AADAFA">fmp</span> <span style="color:#FFFFFF">=</span> <span style="color:#71C6B1">FMP</span><span style="color:#e8e8e8">()</span><span style="color:#FFFFFF">;</span>
    <span style="color:#AADAFA">fmp</span><span style="color:#FFFFFF">.</span><span style="color:#AADAFA">fmpID</span> <span style="color:#FFFFFF">=</span> <span style="color:#BC89BD">await</span> <span style="color:#AADAFA">platform</span><span style="color:#FFFFFF">.</span><span style="color:#DCDCAF">invokeMethod</span><span style="color:#FFFFFF">&lt;</span><span style="color:#71C6B1">String</span><span style="color:#FFFFFF">&gt;</span><span style="color:#e8e8e8">(</span>
        <span style="color:#C5947C">'FMP.build()'</span><span style="color:#FFFFFF">,</span>
        <span style="color:#FFFFFF">&lt;</span><span style="color:#71C6B1">String</span><span style="color:#FFFFFF">,</span> <span style="color:#71C6B1">Object</span><span style="color:#FFFFFF">?&gt;</span> <span style="color:#e8e8e8">{</span>
          <span style="color:#C5947C">'url'</span><span style="color:#FFFFFF">:</span> <span style="color:#AADAFA">url</span><span style="color:#FFFFFF">,</span>
          <span style="color:#C5947C">'environment'</span><span style="color:#FFFFFF">:</span> <span style="color:#AADAFA">environment</span><span style="color:#FFFFFF">,</span>
          <span style="color:#C5947C">'project'</span><span style="color:#FFFFFF">:</span> <span style="color:#AADAFA">project</span><span style="color:#FFFFFF">,</span>
          <span style="color:#C5947C">'udid'</span><span style="color:#FFFFFF">:</span> <span style="color:#AADAFA">udid</span><span style="color:#FFFFFF">,</span>
          <span style="color:#C5947C">'api'</span><span style="color:#FFFFFF">:</span> <span style="color:#AADAFA">api</span><span style="color:#FFFFFF">,</span>
          <span style="color:#C5947C">'encryptionKey'</span><span style="color:#FFFFFF">:</span> <span style="color:#AADAFA">encryptionKey</span><span style="color:#FFFFFF">,</span>
          <span style="color:#C5947C">'retryCount'</span><span style="color:#FFFFFF">:</span> <span style="color:#AADAFA">retryCount</span><span style="color:#FFFFFF">,</span>
          <span style="color:#C5947C">'retryTimeInterval'</span><span style="color:#FFFFFF">:</span> <span style="color:#AADAFA">retryTimeInterval</span><span style="color:#FFFFFF">,</span>
          <span style="color:#C5947C">'certificatePath'</span><span style="color:#FFFFFF">:</span> <span style="color:#AADAFA">certificatePath</span><span style="color:#FFFFFF">,</span>
        <span style="color:#e8e8e8">}</span>
      <span style="color:#e8e8e8">)</span><span style="color:#FFFFFF">;</span>
    <span style="color:#BC89BD">return</span> <span style="color:#AADAFA">fmp</span><span style="color:#FFFFFF">;</span>
  <span style="color:#e8e8e8">}</span>

  <span style="color:#679AD1">static</span> <span style="color:#71C6B1">Future</span><span style="color:#FFFFFF">&lt;</span><span style="color:#71C6B1">void</span><span style="color:#FFFFFF">&gt;</span> <span style="color:#DCDCAF">remove</span><span style="color:#e8e8e8">(</span>
    <span style="color:#e8e8e8">{</span><span style="color:#71C6B1">List</span><span style="color:#FFFFFF">&lt;</span><span style="color:#71C6B1">String</span><span style="color:#FFFFFF">&gt;</span> <span style="color:#AADAFA">objectIDs</span> <span style="color:#FFFFFF">=</span> <span style="color:#679AD1">const</span> <span style="color:#e8e8e8">[]</span><span style="color:#FFFFFF">,</span><span style="color:#e8e8e8">}</span>
    <span style="color:#e8e8e8">)</span> <span style="color:#BC89BD">async</span> <span style="color:#e8e8e8">{</span>
    <span style="color:#BC89BD">await</span> <span style="color:#AADAFA">platform</span><span style="color:#FFFFFF">.</span><span style="color:#DCDCAF">invokeMethod</span><span style="color:#FFFFFF">&lt;</span><span style="color:#71C6B1">bool</span><span style="color:#FFFFFF">&gt;</span><span style="color:#e8e8e8">(</span>
      <span style="color:#C5947C">'FMP.remove()'</span><span style="color:#FFFFFF">,</span>
      <span style="color:#FFFFFF">&lt;</span><span style="color:#71C6B1">String</span><span style="color:#FFFFFF">,</span> <span style="color:#71C6B1">Object</span><span style="color:#FFFFFF">?&gt;</span> <span style="color:#e8e8e8">{</span>
        <span style="color:#C5947C">'objectIDs'</span><span style="color:#FFFFFF">:</span> <span style="color:#AADAFA">objectIDs</span><span style="color:#FFFFFF">,</span>
      <span style="color:#e8e8e8">}</span>
    <span style="color:#e8e8e8">)</span><span style="color:#FFFFFF">;</span>
  <span style="color:#e8e8e8">}</span>

  <span style="color:#71C6B1">Future</span><span style="color:#FFFFFF">&lt;</span><span style="color:#71C6B1">FMPConnection</span><span style="color:#FFFFFF">&gt;</span> <span style="color:#DCDCAF">connection</span><span style="color:#e8e8e8">()</span> <span style="color:#BC89BD">async</span> <span style="color:#e8e8e8">{</span>
    <span style="color:#679AD1">final</span> <span style="color:#AADAFA">connectionID</span> <span style="color:#FFFFFF">=</span> <span style="color:#BC89BD">await</span> <span style="color:#AADAFA">platform</span><span style="color:#FFFFFF">.</span><span style="color:#DCDCAF">invokeMethod</span><span style="color:#FFFFFF">&lt;</span><span style="color:#71C6B1">String</span><span style="color:#FFFFFF">&gt;</span><span style="color:#e8e8e8">(</span>
      <span style="color:#C5947C">'FMP.connection.build()'</span><span style="color:#FFFFFF">,</span>
      <span style="color:#FFFFFF">&lt;</span><span style="color:#71C6B1">String</span><span style="color:#FFFFFF">,</span> <span style="color:#71C6B1">Object</span><span style="color:#FFFFFF">?&gt;</span> <span style="color:#e8e8e8">{</span>
        <span style="color:#C5947C">'fmpID'</span><span style="color:#FFFFFF">:</span> <span style="color:#AADAFA">fmpID</span><span style="color:#FFFFFF">,</span>
      <span style="color:#e8e8e8">}</span>
    <span style="color:#e8e8e8">)</span><span style="color:#FFFFFF">;</span>
    <span style="color:#BC89BD">return</span> <span style="color:#71C6B1">FMPConnection</span><span style="color:#e8e8e8">(</span><span style="color:#679AD1">this</span><span style="color:#FFFFFF">,</span> <span style="color:#AADAFA">connectionID</span><span style="color:#e8e8e8">)</span><span style="color:#FFFFFF">;</span>
  <span style="color:#e8e8e8">}</span>

  <span style="color:#71C6B1">Future</span><span style="color:#FFFFFF">&lt;</span><span style="color:#71C6B1">FMPDatabase</span><span style="color:#FFFFFF">&gt;</span> <span style="color:#DCDCAF">database</span><span style="color:#e8e8e8">(</span>
    <span style="color:#e8e8e8">{</span><span style="color:#71C6B1">String</span><span style="color:#FFFFFF">?</span> <span style="color:#AADAFA">path</span><span style="color:#FFFFFF">,</span><span style="color:#e8e8e8">}</span>
    <span style="color:#e8e8e8">)</span> <span style="color:#BC89BD">async</span> <span style="color:#e8e8e8">{</span>
    <span style="color:#679AD1">final</span> <span style="color:#AADAFA">databaseID</span> <span style="color:#FFFFFF">=</span> <span style="color:#BC89BD">await</span> <span style="color:#AADAFA">platform</span><span style="color:#FFFFFF">.</span><span style="color:#DCDCAF">invokeMethod</span><span style="color:#FFFFFF">&lt;</span><span style="color:#71C6B1">String</span><span style="color:#FFFFFF">&gt;</span><span style="color:#e8e8e8">(</span>
      <span style="color:#C5947C">'FMP.database.build()'</span><span style="color:#FFFFFF">,</span>
      <span style="color:#FFFFFF">&lt;</span><span style="color:#71C6B1">String</span><span style="color:#FFFFFF">,</span> <span style="color:#71C6B1">Object</span><span style="color:#FFFFFF">?&gt;</span> <span style="color:#e8e8e8">{</span>
        <span style="color:#C5947C">'fmpID'</span><span style="color:#FFFFFF">:</span> <span style="color:#AADAFA">fmpID</span><span style="color:#FFFFFF">,</span>
        <span style="color:#C5947C">'databasePath'</span><span style="color:#FFFFFF">:</span> <span style="color:#AADAFA">path</span><span style="color:#FFFFFF">,</span>
      <span style="color:#e8e8e8">}</span>
    <span style="color:#e8e8e8">)</span><span style="color:#FFFFFF">;</span>
    <span style="color:#BC89BD">return</span> <span style="color:#71C6B1">FMPDatabase</span><span style="color:#e8e8e8">(</span><span style="color:#679AD1">this</span><span style="color:#FFFFFF">,</span> <span style="color:#AADAFA">databaseID</span><span style="color:#e8e8e8">)</span><span style="color:#FFFFFF">;</span>
  <span style="color:#e8e8e8">}</span>

  <span style="color:#71C6B1">Future</span><span style="color:#FFFFFF">&lt;</span><span style="color:#71C6B1">FMPFile</span><span style="color:#FFFFFF">&gt;</span> <span style="color:#DCDCAF">file</span><span style="color:#e8e8e8">(</span>
    <span style="color:#e8e8e8">{</span><span style="color:#71C6B1">String</span><span style="color:#FFFFFF">?</span> <span style="color:#AADAFA">mount</span><span style="color:#FFFFFF">,</span>
    <span style="color:#71C6B1">String</span><span style="color:#FFFFFF">?</span> <span style="color:#AADAFA">remotePath</span><span style="color:#FFFFFF">,</span>
    <span style="color:#71C6B1">bool</span><span style="color:#FFFFFF">?</span> <span style="color:#AADAFA">isDirectory</span><span style="color:#FFFFFF">,</span>
    <span style="color:#71C6B1">String</span><span style="color:#FFFFFF">?</span> <span style="color:#AADAFA">localPath</span><span style="color:#FFFFFF">,</span>
    <span style="color:#71C6B1">int</span><span style="color:#FFFFFF">?</span> <span style="color:#AADAFA">depth</span><span style="color:#FFFFFF">,</span>
    <span style="color:#71C6B1">bool</span><span style="color:#FFFFFF">?</span> <span style="color:#AADAFA">applyEncryption</span><span style="color:#FFFFFF">,</span><span style="color:#e8e8e8">}</span>
    <span style="color:#e8e8e8">)</span> <span style="color:#BC89BD">async</span> <span style="color:#e8e8e8">{</span>
    <span style="color:#679AD1">final</span> <span style="color:#AADAFA">fileID</span> <span style="color:#FFFFFF">=</span> <span style="color:#BC89BD">await</span> <span style="color:#AADAFA">platform</span><span style="color:#FFFFFF">.</span><span style="color:#DCDCAF">invokeMethod</span><span style="color:#FFFFFF">&lt;</span><span style="color:#71C6B1">String</span><span style="color:#FFFFFF">&gt;</span><span style="color:#e8e8e8">(</span>
      <span style="color:#C5947C">'FMP.file.build()'</span><span style="color:#FFFFFF">,</span>
      <span style="color:#FFFFFF">&lt;</span><span style="color:#71C6B1">String</span><span style="color:#FFFFFF">,</span> <span style="color:#71C6B1">Object</span><span style="color:#FFFFFF">?&gt;</span> <span style="color:#e8e8e8">{</span>
        <span style="color:#C5947C">'fmpID'</span><span style="color:#FFFFFF">:</span> <span style="color:#AADAFA">fmpID</span><span style="color:#FFFFFF">,</span>
        <span style="color:#C5947C">'mount'</span><span style="color:#FFFFFF">:</span> <span style="color:#AADAFA">mount</span><span style="color:#FFFFFF">,</span>
        <span style="color:#C5947C">'remotePath'</span><span style="color:#FFFFFF">:</span> <span style="color:#AADAFA">remotePath</span><span style="color:#FFFFFF">,</span>
        <span style="color:#C5947C">'isDirectory'</span><span style="color:#FFFFFF">:</span> <span style="color:#AADAFA">isDirectory</span><span style="color:#FFFFFF">,</span>
        <span style="color:#C5947C">'localPath'</span><span style="color:#FFFFFF">:</span> <span style="color:#AADAFA">localPath</span><span style="color:#FFFFFF">,</span>
        <span style="color:#C5947C">'depth'</span><span style="color:#FFFFFF">:</span> <span style="color:#AADAFA">depth</span><span style="color:#FFFFFF">,</span>
        <span style="color:#C5947C">'applyEncryption'</span><span style="color:#FFFFFF">:</span> <span style="color:#AADAFA">applyEncryption</span><span style="color:#FFFFFF">,</span>
      <span style="color:#e8e8e8">}</span>
    <span style="color:#e8e8e8">)</span><span style="color:#FFFFFF">;</span>
    <span style="color:#BC89BD">return</span> <span style="color:#71C6B1">FMPFile</span><span style="color:#e8e8e8">(</span><span style="color:#679AD1">this</span><span style="color:#FFFFFF">,</span> <span style="color:#AADAFA">fileID</span><span style="color:#e8e8e8">)</span><span style="color:#FFFFFF">;</span>
  <span style="color:#e8e8e8">}</span>

  <span style="color:#71C6B1">Future</span><span style="color:#FFFFFF">&lt;</span><span style="color:#71C6B1">FMPLog</span><span style="color:#FFFFFF">&gt;</span> <span style="color:#DCDCAF">log</span><span style="color:#e8e8e8">()</span> <span style="color:#BC89BD">async</span> <span style="color:#e8e8e8">{</span>
    <span style="color:#679AD1">final</span> <span style="color:#AADAFA">logID</span> <span style="color:#FFFFFF">=</span> <span style="color:#BC89BD">await</span> <span style="color:#AADAFA">platform</span><span style="color:#FFFFFF">.</span><span style="color:#DCDCAF">invokeMethod</span><span style="color:#FFFFFF">&lt;</span><span style="color:#71C6B1">String</span><span style="color:#FFFFFF">&gt;</span><span style="color:#e8e8e8">(</span>
      <span style="color:#C5947C">'FMP.log.build()'</span><span style="color:#FFFFFF">,</span>
      <span style="color:#FFFFFF">&lt;</span><span style="color:#71C6B1">String</span><span style="color:#FFFFFF">,</span> <span style="color:#71C6B1">Object</span><span style="color:#FFFFFF">?&gt;</span> <span style="color:#e8e8e8">{</span>
        <span style="color:#C5947C">'fmpID'</span><span style="color:#FFFFFF">:</span> <span style="color:#AADAFA">fmpID</span><span style="color:#FFFFFF">,</span>
      <span style="color:#e8e8e8">}</span>
    <span style="color:#e8e8e8">)</span><span style="color:#FFFFFF">;</span>
    <span style="color:#BC89BD">return</span> <span style="color:#71C6B1">FMPLog</span><span style="color:#e8e8e8">(</span><span style="color:#679AD1">this</span><span style="color:#FFFFFF">,</span> <span style="color:#AADAFA">logID</span><span style="color:#e8e8e8">)</span><span style="color:#FFFFFF">;</span>
  <span style="color:#e8e8e8">}</span>

  <span style="color:#71C6B1">Future</span><span style="color:#FFFFFF">&lt;</span><span style="color:#71C6B1">FMPPush</span><span style="color:#FFFFFF">&gt;</span> <span style="color:#DCDCAF">push</span><span style="color:#e8e8e8">(</span>
    <span style="color:#e8e8e8">{</span><span style="color:#71C6B1">String</span><span style="color:#FFFFFF">?</span> <span style="color:#AADAFA">token</span><span style="color:#FFFFFF">,</span>
    <span style="color:#71C6B1">FMPPushService</span><span style="color:#FFFFFF">?</span> <span style="color:#AADAFA">service</span><span style="color:#FFFFFF">,</span><span style="color:#e8e8e8">}</span>
    <span style="color:#e8e8e8">)</span> <span style="color:#BC89BD">async</span> <span style="color:#e8e8e8">{</span>
    <span style="color:#679AD1">final</span> <span style="color:#AADAFA">pushID</span> <span style="color:#FFFFFF">=</span> <span style="color:#BC89BD">await</span> <span style="color:#AADAFA">platform</span><span style="color:#FFFFFF">.</span><span style="color:#DCDCAF">invokeMethod</span><span style="color:#FFFFFF">&lt;</span><span style="color:#71C6B1">String</span><span style="color:#FFFFFF">&gt;</span><span style="color:#e8e8e8">(</span>
      <span style="color:#C5947C">'FMP.push.build()'</span><span style="color:#FFFFFF">,</span>
      <span style="color:#FFFFFF">&lt;</span><span style="color:#71C6B1">String</span><span style="color:#FFFFFF">,</span> <span style="color:#71C6B1">Object</span><span style="color:#FFFFFF">?&gt;</span> <span style="color:#e8e8e8">{</span>
        <span style="color:#C5947C">'fmpID'</span><span style="color:#FFFFFF">:</span> <span style="color:#AADAFA">fmpID</span><span style="color:#FFFFFF">,</span>
        <span style="color:#C5947C">'token'</span><span style="color:#FFFFFF">:</span> <span style="color:#AADAFA">token</span><span style="color:#FFFFFF">,</span>
        <span style="color:#C5947C">'service'</span><span style="color:#FFFFFF">:</span> <span style="color:#AADAFA">service</span><span style="color:#FFFFFF">?.</span><span style="color:#AADAFA">name</span><span style="color:#FFFFFF">,</span>
      <span style="color:#e8e8e8">}</span>
    <span style="color:#e8e8e8">)</span><span style="color:#FFFFFF">;</span>
    <span style="color:#BC89BD">return</span> <span style="color:#71C6B1">FMPPush</span><span style="color:#e8e8e8">(</span><span style="color:#679AD1">this</span><span style="color:#FFFFFF">,</span> <span style="color:#AADAFA">pushID</span><span style="color:#e8e8e8">)</span><span style="color:#FFFFFF">;</span>
  <span style="color:#e8e8e8">}</span>

  <span style="color:#71C6B1">Future</span><span style="color:#FFFFFF">&lt;</span><span style="color:#71C6B1">FMPQuery</span><span style="color:#FFFFFF">&gt;</span> <span style="color:#DCDCAF">query</span><span style="color:#e8e8e8">(</span>
    <span style="color:#e8e8e8">{</span><span style="color:#71C6B1">List</span><span style="color:#FFFFFF">&lt;</span><span style="color:#71C6B1">String</span><span style="color:#FFFFFF">&gt;?</span> <span style="color:#AADAFA">select</span><span style="color:#FFFFFF">,</span>
    <span style="color:#71C6B1">FMPTable</span><span style="color:#FFFFFF">?</span> <span style="color:#AADAFA">from</span><span style="color:#FFFFFF">,</span>
    <span style="color:#71C6B1">FMPTable</span><span style="color:#FFFFFF">?</span> <span style="color:#AADAFA">joinTable</span><span style="color:#FFFFFF">,</span>
    <span style="color:#71C6B1">FMPQueryJoinType</span><span style="color:#FFFFFF">?</span> <span style="color:#AADAFA">joinType</span><span style="color:#FFFFFF">,</span>
    <span style="color:#71C6B1">List</span><span style="color:#FFFFFF">&lt;</span><span style="color:#71C6B1">String</span><span style="color:#FFFFFF">&gt;?</span> <span style="color:#AADAFA">on</span><span style="color:#FFFFFF">,</span>
    <span style="color:#71C6B1">String</span><span style="color:#FFFFFF">?</span> <span style="color:#AADAFA">using</span><span style="color:#FFFFFF">,</span>
    <span style="color:#71C6B1">List</span><span style="color:#FFFFFF">&lt;</span><span style="color:#71C6B1">String</span><span style="color:#FFFFFF">&gt;?</span> <span style="color:#AADAFA">where</span><span style="color:#FFFFFF">,</span>
    <span style="color:#71C6B1">List</span><span style="color:#FFFFFF">&lt;</span><span style="color:#71C6B1">Map</span><span style="color:#FFFFFF">&lt;</span><span style="color:#71C6B1">String</span><span style="color:#FFFFFF">,</span><span style="color:#71C6B1">String</span><span style="color:#FFFFFF">&gt;&gt;?</span> <span style="color:#AADAFA">orderBy</span><span style="color:#FFFFFF">,</span>
    <span style="color:#71C6B1">int</span><span style="color:#FFFFFF">?</span> <span style="color:#AADAFA">limit</span><span style="color:#FFFFFF">,</span>
    <span style="color:#71C6B1">int</span><span style="color:#FFFFFF">?</span> <span style="color:#AADAFA">offset</span><span style="color:#FFFFFF">,</span>
    <span style="color:#71C6B1">List</span><span style="color:#FFFFFF">&lt;</span><span style="color:#71C6B1">String</span><span style="color:#FFFFFF">&gt;?</span> <span style="color:#AADAFA">groupBy</span><span style="color:#FFFFFF">,</span>
    <span style="color:#71C6B1">List</span><span style="color:#FFFFFF">&lt;</span><span style="color:#71C6B1">String</span><span style="color:#FFFFFF">&gt;?</span> <span style="color:#AADAFA">having</span><span style="color:#FFFFFF">,</span>
    <span style="color:#71C6B1">List</span><span style="color:#FFFFFF">&lt;</span><span style="color:#71C6B1">FMPTransaction</span><span style="color:#FFFFFF">&gt;?</span> <span style="color:#AADAFA">transactions</span><span style="color:#FFFFFF">,</span><span style="color:#e8e8e8">}</span>
    <span style="color:#e8e8e8">)</span> <span style="color:#BC89BD">async</span> <span style="color:#e8e8e8">{</span>

    <span style="color:#71C6B1">List</span><span style="color:#FFFFFF">&lt;</span><span style="color:#71C6B1">String</span><span style="color:#FFFFFF">?&gt;?</span> <span style="color:#AADAFA">transactionIDs</span> <span style="color:#FFFFFF">=</span> <span style="color:#AADAFA">transactions</span><span style="color:#FFFFFF">?.</span><span style="color:#DCDCAF">map</span><span style="color:#e8e8e8">(</span><span style="color:#e8e8e8">(</span><span style="color:#AADAFA">transaction</span><span style="color:#e8e8e8">)</span> <span style="color:#FFFFFF">=&gt;</span> <span style="color:#AADAFA">transaction</span><span style="color:#FFFFFF">.</span><span style="color:#AADAFA">fmpID</span><span style="color:#e8e8e8">)</span><span style="color:#FFFFFF">.</span><span style="color:#DCDCAF">toList</span><span style="color:#e8e8e8">()</span><span style="color:#FFFFFF">;</span>

    <span style="color:#679AD1">final</span> <span style="color:#AADAFA">queryID</span> <span style="color:#FFFFFF">=</span> <span style="color:#BC89BD">await</span> <span style="color:#AADAFA">platform</span><span style="color:#FFFFFF">.</span><span style="color:#DCDCAF">invokeMethod</span><span style="color:#FFFFFF">&lt;</span><span style="color:#71C6B1">String</span><span style="color:#FFFFFF">&gt;</span><span style="color:#e8e8e8">(</span>
      <span style="color:#C5947C">'FMP.query.build()'</span><span style="color:#FFFFFF">,</span>
      <span style="color:#FFFFFF">&lt;</span><span style="color:#71C6B1">String</span><span style="color:#FFFFFF">,</span> <span style="color:#71C6B1">Object</span><span style="color:#FFFFFF">?&gt;</span> <span style="color:#e8e8e8">{</span>
        <span style="color:#C5947C">'fmpID'</span><span style="color:#FFFFFF">:</span> <span style="color:#AADAFA">fmpID</span><span style="color:#FFFFFF">,</span>
        <span style="color:#C5947C">'select'</span><span style="color:#FFFFFF">:</span> <span style="color:#AADAFA">select</span><span style="color:#FFFFFF">,</span>
        <span style="color:#C5947C">'fromTableID'</span><span style="color:#FFFFFF">:</span> <span style="color:#AADAFA">from</span><span style="color:#FFFFFF">?.</span><span style="color:#AADAFA">fmpID</span><span style="color:#FFFFFF">,</span>
        <span style="color:#C5947C">'join'</span><span style="color:#FFFFFF">:</span> <span style="color:#e8e8e8">{</span>
          <span style="color:#C5947C">'tableID'</span><span style="color:#FFFFFF">:</span> <span style="color:#AADAFA">joinTable</span><span style="color:#FFFFFF">?.</span><span style="color:#AADAFA">fmpID</span><span style="color:#FFFFFF">,</span>
          <span style="color:#C5947C">'type'</span><span style="color:#FFFFFF">:</span> <span style="color:#AADAFA">joinType</span><span style="color:#FFFFFF">?.</span><span style="color:#AADAFA">name</span><span style="color:#FFFFFF">,</span>
        <span style="color:#e8e8e8">}</span><span style="color:#FFFFFF">,</span>
        <span style="color:#C5947C">'on'</span><span style="color:#FFFFFF">:</span> <span style="color:#AADAFA">on</span><span style="color:#FFFFFF">,</span>
        <span style="color:#C5947C">'using'</span><span style="color:#FFFFFF">:</span> <span style="color:#AADAFA">using</span><span style="color:#FFFFFF">,</span>
        <span style="color:#C5947C">'where'</span><span style="color:#FFFFFF">:</span> <span style="color:#AADAFA">where</span><span style="color:#FFFFFF">,</span>
        <span style="color:#C5947C">'orderBy'</span><span style="color:#FFFFFF">:</span> <span style="color:#AADAFA">orderBy</span><span style="color:#FFFFFF">,</span>
        <span style="color:#C5947C">'limit'</span><span style="color:#FFFFFF">:</span> <span style="color:#AADAFA">limit</span><span style="color:#FFFFFF">,</span>
        <span style="color:#C5947C">'offset'</span><span style="color:#FFFFFF">:</span> <span style="color:#AADAFA">offset</span><span style="color:#FFFFFF">,</span>
        <span style="color:#C5947C">'groupBy'</span><span style="color:#FFFFFF">:</span> <span style="color:#AADAFA">groupBy</span><span style="color:#FFFFFF">,</span>
        <span style="color:#C5947C">'having'</span><span style="color:#FFFFFF">:</span> <span style="color:#AADAFA">having</span><span style="color:#FFFFFF">,</span>
        <span style="color:#C5947C">'transactionIDs'</span><span style="color:#FFFFFF">:</span> <span style="color:#AADAFA">transactionIDs</span><span style="color:#FFFFFF">,</span>
      <span style="color:#e8e8e8">}</span>
    <span style="color:#e8e8e8">)</span><span style="color:#FFFFFF">;</span>
    <span style="color:#BC89BD">return</span> <span style="color:#71C6B1">FMPQuery</span><span style="color:#e8e8e8">(</span><span style="color:#679AD1">this</span><span style="color:#FFFFFF">,</span> <span style="color:#AADAFA">queryID</span><span style="color:#e8e8e8">)</span><span style="color:#FFFFFF">;</span>
  <span style="color:#e8e8e8">}</span>

  <span style="color:#71C6B1">Future</span><span style="color:#FFFFFF">&lt;</span><span style="color:#71C6B1">FMPResource</span><span style="color:#FFFFFF">&gt;</span> <span style="color:#DCDCAF">resource</span><span style="color:#e8e8e8">(</span>
    <span style="color:#e8e8e8">{</span><span style="color:#71C6B1">String</span><span style="color:#FFFFFF">?</span> <span style="color:#AADAFA">name</span><span style="color:#FFFFFF">,</span>
    <span style="color:#71C6B1">String</span><span style="color:#FFFFFF">?</span> <span style="color:#AADAFA">params</span><span style="color:#FFFFFF">,</span>
    <span style="color:#71C6B1">bool</span><span style="color:#FFFFFF">?</span> <span style="color:#AADAFA">isDelta</span><span style="color:#FFFFFF">,</span>
    <span style="color:#71C6B1">bool</span><span style="color:#FFFFFF">?</span> <span style="color:#AADAFA">isFiltered</span><span style="color:#FFFFFF">,</span>
    <span style="color:#71C6B1">bool</span><span style="color:#FFFFFF">?</span> <span style="color:#AADAFA">isLocalCached</span><span style="color:#e8e8e8">}</span>
    <span style="color:#e8e8e8">)</span> <span style="color:#BC89BD">async</span> <span style="color:#e8e8e8">{</span>
    <span style="color:#679AD1">final</span> <span style="color:#AADAFA">resourceID</span> <span style="color:#FFFFFF">=</span> <span style="color:#BC89BD">await</span> <span style="color:#AADAFA">platform</span><span style="color:#FFFFFF">.</span><span style="color:#DCDCAF">invokeMethod</span><span style="color:#FFFFFF">&lt;</span><span style="color:#71C6B1">String</span><span style="color:#FFFFFF">&gt;</span><span style="color:#e8e8e8">(</span>
      <span style="color:#C5947C">'FMP.resource.build()'</span><span style="color:#FFFFFF">,</span>
      <span style="color:#FFFFFF">&lt;</span><span style="color:#71C6B1">String</span><span style="color:#FFFFFF">,</span> <span style="color:#71C6B1">Object</span><span style="color:#FFFFFF">?&gt;</span> <span style="color:#e8e8e8">{</span>
        <span style="color:#C5947C">'fmpID'</span><span style="color:#FFFFFF">:</span> <span style="color:#AADAFA">fmpID</span><span style="color:#FFFFFF">,</span>
        <span style="color:#C5947C">'name'</span><span style="color:#FFFFFF">:</span> <span style="color:#AADAFA">name</span><span style="color:#FFFFFF">,</span>
        <span style="color:#C5947C">'params'</span><span style="color:#FFFFFF">:</span> <span style="color:#AADAFA">params</span><span style="color:#FFFFFF">,</span>
        <span style="color:#C5947C">'isDelta'</span><span style="color:#FFFFFF">:</span> <span style="color:#AADAFA">isDelta</span><span style="color:#FFFFFF">,</span>
        <span style="color:#C5947C">'isFiltered'</span><span style="color:#FFFFFF">:</span> <span style="color:#AADAFA">isFiltered</span><span style="color:#FFFFFF">,</span>
        <span style="color:#C5947C">'isLocalCached'</span><span style="color:#FFFFFF">:</span> <span style="color:#AADAFA">isLocalCached</span><span style="color:#FFFFFF">,</span>
      <span style="color:#e8e8e8">}</span>
    <span style="color:#e8e8e8">)</span><span style="color:#FFFFFF">;</span>
    <span style="color:#BC89BD">return</span> <span style="color:#71C6B1">FMPResource</span><span style="color:#e8e8e8">(</span><span style="color:#679AD1">this</span><span style="color:#FFFFFF">,</span> <span style="color:#AADAFA">resourceID</span><span style="color:#e8e8e8">)</span><span style="color:#FFFFFF">;</span>
  <span style="color:#e8e8e8">}</span>

  <span style="color:#71C6B1">Future</span><span style="color:#FFFFFF">&lt;</span><span style="color:#71C6B1">FMPScheme</span><span style="color:#FFFFFF">&gt;</span> <span style="color:#DCDCAF">scheme</span><span style="color:#e8e8e8">(</span>
  <span style="color:#e8e8e8">)</span> <span style="color:#BC89BD">async</span> <span style="color:#e8e8e8">{</span>
    <span style="color:#679AD1">final</span> <span style="color:#AADAFA">schemeID</span> <span style="color:#FFFFFF">=</span> <span style="color:#BC89BD">await</span> <span style="color:#AADAFA">platform</span><span style="color:#FFFFFF">.</span><span style="color:#DCDCAF">invokeMethod</span><span style="color:#FFFFFF">&lt;</span><span style="color:#71C6B1">String</span><span style="color:#FFFFFF">&gt;</span><span style="color:#e8e8e8">(</span>
      <span style="color:#C5947C">'FMP.scheme.build()'</span><span style="color:#FFFFFF">,</span>
      <span style="color:#FFFFFF">&lt;</span><span style="color:#71C6B1">String</span><span style="color:#FFFFFF">,</span> <span style="color:#71C6B1">Object</span><span style="color:#FFFFFF">?&gt;</span> <span style="color:#e8e8e8">{</span>
        <span style="color:#C5947C">'fmpID'</span><span style="color:#FFFFFF">:</span> <span style="color:#AADAFA">fmpID</span><span style="color:#FFFFFF">,</span>
      <span style="color:#e8e8e8">}</span>
    <span style="color:#e8e8e8">)</span><span style="color:#FFFFFF">;</span>
    <span style="color:#BC89BD">return</span> <span style="color:#71C6B1">FMPScheme</span><span style="color:#e8e8e8">(</span><span style="color:#679AD1">this</span><span style="color:#FFFFFF">,</span> <span style="color:#AADAFA">schemeID</span><span style="color:#e8e8e8">)</span><span style="color:#FFFFFF">;</span>
  <span style="color:#e8e8e8">}</span>

  <span style="color:#71C6B1">Future</span><span style="color:#FFFFFF">&lt;</span><span style="color:#71C6B1">FMPTable</span><span style="color:#FFFFFF">&gt;</span> <span style="color:#DCDCAF">table</span><span style="color:#e8e8e8">(</span>
    <span style="color:#e8e8e8">{</span><span style="color:#71C6B1">String</span><span style="color:#FFFFFF">?</span> <span style="color:#AADAFA">name</span><span style="color:#FFFFFF">,</span>
    <span style="color:#71C6B1">FMPResource</span><span style="color:#FFFFFF">?</span> <span style="color:#AADAFA">resource</span><span style="color:#FFFFFF">,</span><span style="color:#e8e8e8">}</span>
    <span style="color:#e8e8e8">)</span> <span style="color:#BC89BD">async</span> <span style="color:#e8e8e8">{</span>
    <span style="color:#679AD1">final</span> <span style="color:#AADAFA">tableID</span> <span style="color:#FFFFFF">=</span> <span style="color:#BC89BD">await</span> <span style="color:#AADAFA">platform</span><span style="color:#FFFFFF">.</span><span style="color:#DCDCAF">invokeMethod</span><span style="color:#FFFFFF">&lt;</span><span style="color:#71C6B1">String</span><span style="color:#FFFFFF">&gt;</span><span style="color:#e8e8e8">(</span>
      <span style="color:#C5947C">'FMP.table.build()'</span><span style="color:#FFFFFF">,</span>
      <span style="color:#FFFFFF">&lt;</span><span style="color:#71C6B1">String</span><span style="color:#FFFFFF">,</span> <span style="color:#71C6B1">Object</span><span style="color:#FFFFFF">?&gt;</span> <span style="color:#e8e8e8">{</span>
        <span style="color:#C5947C">'fmpID'</span><span style="color:#FFFFFF">:</span> <span style="color:#AADAFA">fmpID</span><span style="color:#FFFFFF">,</span>
        <span style="color:#C5947C">'name'</span><span style="color:#FFFFFF">:</span> <span style="color:#AADAFA">name</span><span style="color:#FFFFFF">,</span>
        <span style="color:#C5947C">'resourceID'</span><span style="color:#FFFFFF">:</span> <span style="color:#AADAFA">resource</span><span style="color:#FFFFFF">?.</span><span style="color:#AADAFA">fmpID</span><span style="color:#FFFFFF">,</span>
      <span style="color:#e8e8e8">}</span>
    <span style="color:#e8e8e8">)</span><span style="color:#FFFFFF">;</span>
    <span style="color:#BC89BD">return</span> <span style="color:#71C6B1">FMPTable</span><span style="color:#e8e8e8">(</span><span style="color:#679AD1">this</span><span style="color:#FFFFFF">,</span> <span style="color:#AADAFA">tableID</span><span style="color:#e8e8e8">)</span><span style="color:#FFFFFF">;</span>
  <span style="color:#e8e8e8">}</span>

  <span style="color:#71C6B1">Future</span><span style="color:#FFFFFF">&lt;</span><span style="color:#71C6B1">FMPTransaction</span><span style="color:#FFFFFF">&gt;</span> <span style="color:#DCDCAF">transaction</span><span style="color:#e8e8e8">(</span>
    <span style="color:#e8e8e8">{</span><span style="color:#71C6B1">String</span><span style="color:#FFFFFF">?</span> <span style="color:#AADAFA">identifier</span><span style="color:#FFFFFF">,</span>
    <span style="color:#71C6B1">FMPResource</span><span style="color:#FFFFFF">?</span> <span style="color:#AADAFA">resource</span><span style="color:#FFFFFF">,</span><span style="color:#e8e8e8">}</span>
    <span style="color:#e8e8e8">)</span> <span style="color:#BC89BD">async</span> <span style="color:#e8e8e8">{</span>
    <span style="color:#679AD1">final</span> <span style="color:#AADAFA">transactionID</span> <span style="color:#FFFFFF">=</span> <span style="color:#BC89BD">await</span> <span style="color:#AADAFA">platform</span><span style="color:#FFFFFF">.</span><span style="color:#DCDCAF">invokeMethod</span><span style="color:#FFFFFF">&lt;</span><span style="color:#71C6B1">String</span><span style="color:#FFFFFF">&gt;</span><span style="color:#e8e8e8">(</span>
      <span style="color:#C5947C">'FMP.transaction.build()'</span><span style="color:#FFFFFF">,</span>
      <span style="color:#FFFFFF">&lt;</span><span style="color:#71C6B1">String</span><span style="color:#FFFFFF">,</span> <span style="color:#71C6B1">Object</span><span style="color:#FFFFFF">?&gt;</span> <span style="color:#e8e8e8">{</span>
        <span style="color:#C5947C">'fmpID'</span><span style="color:#FFFFFF">:</span> <span style="color:#AADAFA">fmpID</span><span style="color:#FFFFFF">,</span>
        <span style="color:#C5947C">'identifier'</span><span style="color:#FFFFFF">:</span> <span style="color:#AADAFA">identifier</span><span style="color:#FFFFFF">,</span>
        <span style="color:#C5947C">'resourceID'</span><span style="color:#FFFFFF">:</span> <span style="color:#AADAFA">resource</span><span style="color:#FFFFFF">?.</span><span style="color:#AADAFA">fmpID</span><span style="color:#FFFFFF">,</span>
      <span style="color:#e8e8e8">}</span>
    <span style="color:#e8e8e8">)</span><span style="color:#FFFFFF">;</span>
    <span style="color:#BC89BD">return</span> <span style="color:#71C6B1">FMPTransaction</span><span style="color:#e8e8e8">(</span><span style="color:#679AD1">this</span><span style="color:#FFFFFF">,</span> <span style="color:#AADAFA">transactionID</span><span style="color:#e8e8e8">)</span><span style="color:#FFFFFF">;</span>
  <span style="color:#e8e8e8">}</span>

  <span style="color:#71C6B1">Future</span><span style="color:#FFFFFF">&lt;</span><span style="color:#71C6B1">FMPUser</span><span style="color:#FFFFFF">&gt;</span> <span style="color:#DCDCAF">user</span><span style="color:#e8e8e8">(</span>
    <span style="color:#e8e8e8">{</span><span style="color:#71C6B1">String</span><span style="color:#FFFFFF">?</span> <span style="color:#AADAFA">login</span><span style="color:#FFFFFF">,</span>
    <span style="color:#71C6B1">String</span><span style="color:#FFFFFF">?</span> <span style="color:#AADAFA">password</span><span style="color:#FFFFFF">,</span><span style="color:#e8e8e8">}</span>
    <span style="color:#e8e8e8">)</span> <span style="color:#BC89BD">async</span> <span style="color:#e8e8e8">{</span>
    <span style="color:#679AD1">final</span> <span style="color:#AADAFA">userID</span> <span style="color:#FFFFFF">=</span> <span style="color:#BC89BD">await</span> <span style="color:#AADAFA">platform</span><span style="color:#FFFFFF">.</span><span style="color:#DCDCAF">invokeMethod</span><span style="color:#FFFFFF">&lt;</span><span style="color:#71C6B1">String</span><span style="color:#FFFFFF">&gt;</span><span style="color:#e8e8e8">(</span>
      <span style="color:#C5947C">'FMP.user.build()'</span><span style="color:#FFFFFF">,</span>
      <span style="color:#FFFFFF">&lt;</span><span style="color:#71C6B1">String</span><span style="color:#FFFFFF">,</span> <span style="color:#71C6B1">Object</span><span style="color:#FFFFFF">?&gt;</span> <span style="color:#e8e8e8">{</span>
        <span style="color:#C5947C">'fmpID'</span><span style="color:#FFFFFF">:</span> <span style="color:#AADAFA">fmpID</span><span style="color:#FFFFFF">,</span>
        <span style="color:#C5947C">'login'</span><span style="color:#FFFFFF">:</span> <span style="color:#AADAFA">login</span><span style="color:#FFFFFF">,</span>
        <span style="color:#C5947C">'password'</span><span style="color:#FFFFFF">:</span> <span style="color:#AADAFA">password</span><span style="color:#FFFFFF">,</span>
      <span style="color:#e8e8e8">}</span>
    <span style="color:#e8e8e8">)</span><span style="color:#FFFFFF">;</span>
    <span style="color:#BC89BD">return</span> <span style="color:#71C6B1">FMPUser</span><span style="color:#e8e8e8">(</span><span style="color:#679AD1">this</span><span style="color:#FFFFFF">,</span> <span style="color:#AADAFA">userID</span><span style="color:#e8e8e8">)</span><span style="color:#FFFFFF">;</span>
  <span style="color:#e8e8e8">}</span>

  <span style="color:#71C6B1">Future</span><span style="color:#FFFFFF">&lt;</span><span style="color:#71C6B1">FMPWeb</span><span style="color:#FFFFFF">&gt;</span> <span style="color:#DCDCAF">web</span><span style="color:#e8e8e8">(</span>
    <span style="color:#e8e8e8">{</span><span style="color:#71C6B1">FMPWebRESTMethod</span><span style="color:#FFFFFF">?</span> <span style="color:#AADAFA">restMethod</span><span style="color:#FFFFFF">,</span>
    <span style="color:#71C6B1">String</span><span style="color:#FFFFFF">?</span> <span style="color:#AADAFA">path</span><span style="color:#FFFFFF">,</span>
    <span style="color:#71C6B1">Map</span><span style="color:#FFFFFF">&lt;</span><span style="color:#71C6B1">String</span><span style="color:#FFFFFF">,</span> <span style="color:#71C6B1">Object</span><span style="color:#FFFFFF">?&gt;?</span> <span style="color:#AADAFA">queryParams</span><span style="color:#FFFFFF">,</span>
</div></div>
<svg class="abs" style="left:3px;top:1225px;" width="2006" height="38" viewBox="3 1225 2006 38" fill="none" stroke="#fff" stroke-width="3" stroke-linecap="butt" stroke-linejoin="miter"><path d="M28.8 1240.9 L36.4 1248.2 L28.8 1255.5 M44.8 1233.6 L38 1240.9 L44.8 1248.2" stroke-width="1.8"/><circle cx="100.6" cy="1245" r="11" stroke-width="1.7"/><path d="M96 1240.4 L105.2 1249.6 M105.2 1240.4 L96 1249.6" stroke-width="1.7"/><path d="M157.8 1234.6 L168.6 1254.4 H147 Z" stroke-width="1.7" stroke-linejoin="round"/><path d="M157.8 1240.8 V1248.4 M157.8 1250 V1252.6" stroke-width="2.1"/><circle cx="240.3" cy="1239.8" r="1.7" stroke-width="1.5"/><path d="M239.7 1241.4 L233.4 1256.4 M240.9 1241.4 L247.2 1256.4 M237.4 1247 H243.2 M235.2 1252.2 H245.4" stroke-width="1.6"/><path d="M235.6 1235.6 A6.9 6.9 0 0 0 235.6 1245.2 M245 1235.6 A6.9 6.9 0 0 1 245 1245.2 M233 1232.8 A11.9 11.9 0 0 0 233 1247.6 M247.6 1232.8 A11.9 11.9 0 0 1 247.6 1247.6" stroke-width="1.5"/><path d="M1959.4 1252.8 L1961.4 1245.5 V1241.4 a7.7 7.8 0 0 1 15.4 0 V1245.5 L1978.8 1252.8 Z M1966.1 1253.8 a3 3 0 0 0 6 0" stroke-width="1.8" stroke-linejoin="round"/></svg>
<span class="t" id="t30" style="left:121.98299999999999px;top:1234.18px;font-size:24px;color:#fff;letter-spacing:0.000px;">0</span>
<span class="t" id="t31" style="left:179.156px;top:1234.18px;font-size:24px;color:#fff;letter-spacing:0.000px;">0</span>
<span class="t" id="t32" style="left:260.983px;top:1234.18px;font-size:24px;color:#fff;letter-spacing:0.000px;">0</span>
<span class="t" id="t33" style="left:941.8589999999999px;top:1233.18px;font-size:24px;color:#fff;letter-spacing:0.788px;">Ln 1, Col 40</span>
<span class="t" id="t34" style="left:1112.3390000000002px;top:1233.18px;font-size:24px;color:#fff;letter-spacing:0.610px;">Spaces: 2</span>
<span class="t" id="t35" style="left:1255.937px;top:1233.18px;font-size:24px;color:#fff;letter-spacing:1.252px;">UTF-8</span>
<span class="t" id="t36" style="left:1360.8590000000002px;top:1233.18px;font-size:24px;color:#fff;letter-spacing:-0.360px;">LF</span>
<span class="t" id="t37" style="left:1420.4579999999999px;top:1232.68px;font-size:24px;color:#fff;letter-spacing:5.280px;">{}</span>
<span class="t" id="t38" style="left:1456.276px;top:1233.18px;font-size:24px;color:#fff;letter-spacing:1.204px;">Dart</span>
<span class="t" id="t39" style="left:1534.121px;top:1233.18px;font-size:24px;color:#fff;letter-spacing:0.680px;">Victoriia's iPhone 13 Pro Max (ios)</span>
<div id="win"></div>
</div>
</body></html>
